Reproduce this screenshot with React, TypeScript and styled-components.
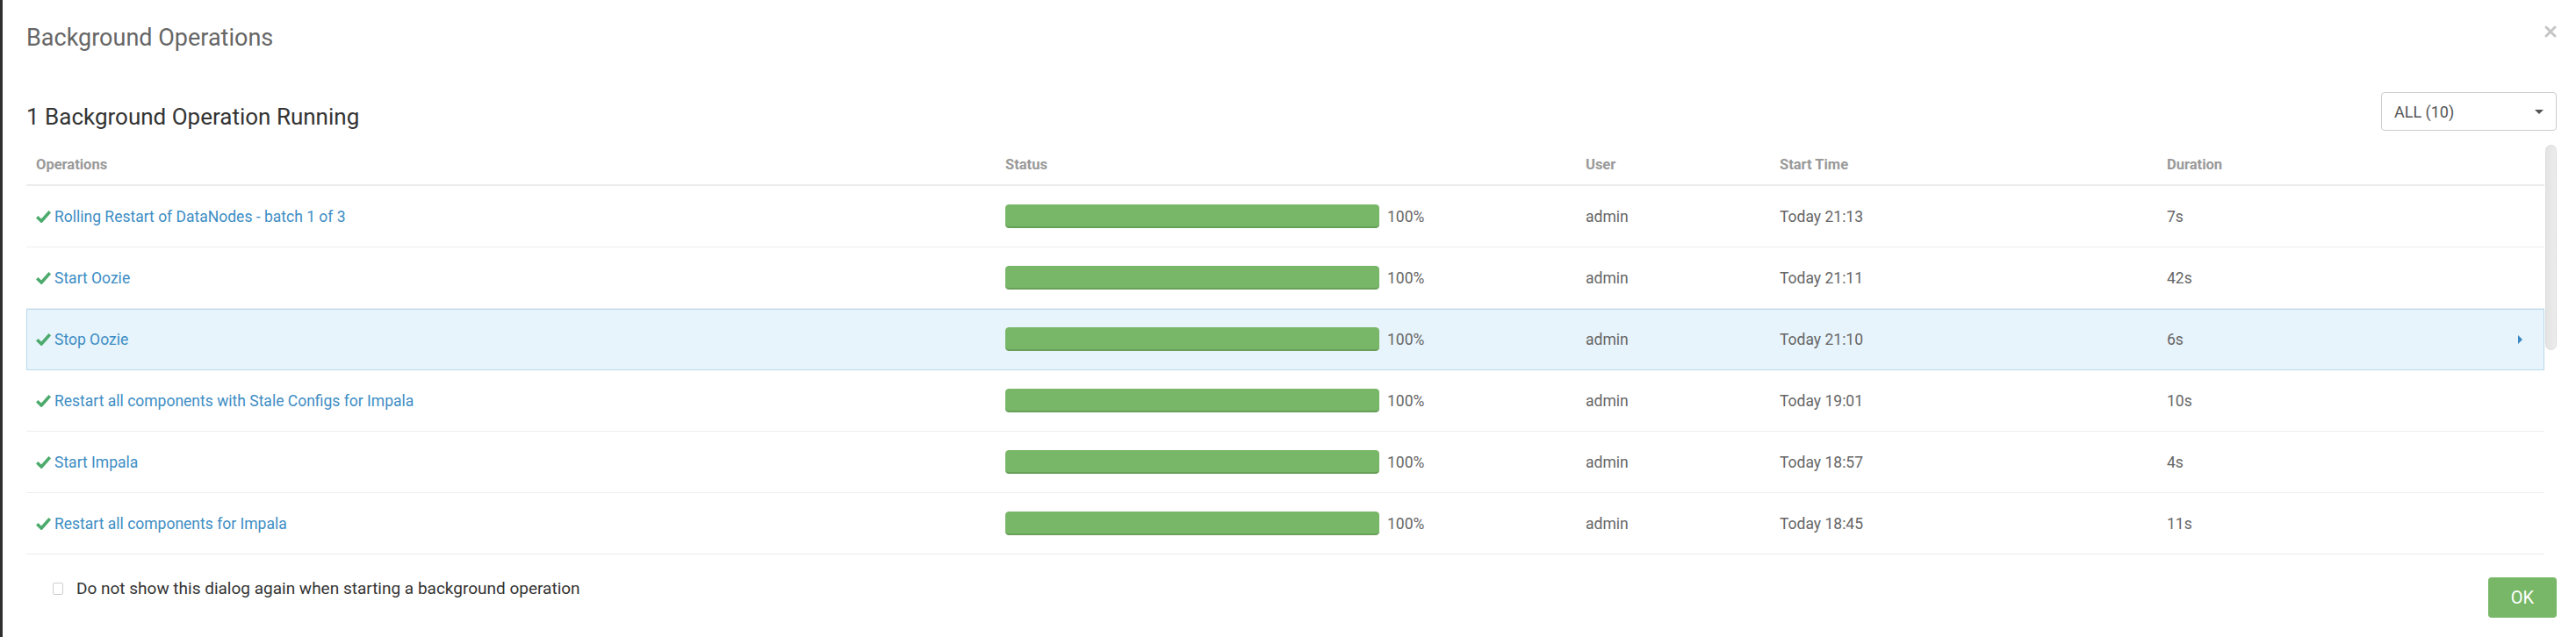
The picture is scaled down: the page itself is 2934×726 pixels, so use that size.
import React from "react";
import styled, { createGlobalStyle, css } from "styled-components";

type Operation = {
  name: string;
  progress: number;
  user: string;
  startTime: string;
  duration: string;
};

const operations: Operation[] = [
  { name: "Rolling Restart of DataNodes - batch 1 of 3", progress: 100, user: "admin", startTime: "Today 21:13", duration: "7s" },
  { name: "Start Oozie", progress: 100, user: "admin", startTime: "Today 21:11", duration: "42s" },
  { name: "Stop Oozie", progress: 100, user: "admin", startTime: "Today 21:10", duration: "6s" },
  { name: "Restart all components with Stale Configs for Impala", progress: 100, user: "admin", startTime: "Today 19:01", duration: "10s" },
  { name: "Start Impala", progress: 100, user: "admin", startTime: "Today 18:57", duration: "4s" },
  { name: "Restart all components for Impala", progress: 100, user: "admin", startTime: "Today 18:45", duration: "11s" },
];

const SELECTED = 2;

const CheckIcon = () => (
  <CheckSvg viewBox="0 0 17 15" aria-hidden>
    <path d="M1.2 8.2 L6.2 13 L15.8 2.2" fill="none" stroke="#4cab6c" strokeWidth="3.6" strokeLinejoin="miter" />
  </CheckSvg>
);

const App = () => {
  return (
    <>
      <GlobalStyle />
      <Modal>
        <ModalHeader>
          <ModalTitle>Background Operations</ModalTitle>
          <CloseButton aria-label="close">
            <svg width="14" height="14" viewBox="0 0 14 14">
              <path d="M2 2 L12 12 M12 2 L2 12" stroke="#c6c6c6" strokeWidth="3" strokeLinecap="round" />
            </svg>
          </CloseButton>
        </ModalHeader>

        <Toolbar>
          <RunningTitle>1 Background Operation Running</RunningTitle>
          <Select>
            <span>ALL (10)</span>
            <Caret />
          </Select>
        </Toolbar>

        <ScrollArea>
          <Viewport>
            <HeadRow>
              <HeadCell>Operations</HeadCell>
              <HeadCell>Status</HeadCell>
              <HeadCell>User</HeadCell>
              <HeadCell>Start Time</HeadCell>
              <HeadCell>Duration</HeadCell>
            </HeadRow>
            {operations.map((op, i) => (
              <Row key={op.name} $selected={i === SELECTED}>
                <Cell>
                  <CheckIcon />
                  <OpLink>{op.name}</OpLink>
                </Cell>
                <Cell>
                  <ProgressTrack>
                    <ProgressFill style={{ width: `${op.progress}%` }} />
                  </ProgressTrack>
                  <Percent>{op.progress}%</Percent>
                </Cell>
                <Cell>{op.user}</Cell>
                <Cell>{op.startTime}</Cell>
                <DurationCell>
                  {op.duration}
                  {i === SELECTED && <RowArrow />}
                </DurationCell>
              </Row>
            ))}
          </Viewport>
          <ScrollTrack>
            <ScrollThumb />
          </ScrollTrack>
        </ScrollArea>

        <Footer>
          <CheckLabel>
            <CheckBox />
            Do not show this dialog again when starting a background operation
          </CheckLabel>
          <OkButton>OK</OkButton>
        </Footer>
      </Modal>
    </>
  );
};

export default App;

const GlobalStyle = createGlobalStyle`
  html, body {
    margin: 0;
    padding: 0;
    background: #2f2f2f;
  }
  body {
    font-family: Roboto, "Liberation Sans", sans-serif;
  }
`;

const Modal = styled.div`
  margin-left: 3px;
  height: 726px;
  box-sizing: border-box;
  background: #fff;
  padding: 27px 22px 0 27px;
  display: flex;
  flex-direction: column;
  overflow: hidden;
`;

const ModalHeader = styled.div`
  display: flex;
  justify-content: space-between;
  align-items: flex-start;
`;

const ModalTitle = styled.h4`
  margin: 0;
  font-size: 27px;
  line-height: 32px;
  font-weight: 400;
  color: #666;
`;

const CloseButton = styled.button`
  border: 0;
  background: none;
  padding: 0;
  margin-top: 2px;
  width: 14px;
  height: 14px;
  display: flex;
  cursor: pointer;
`;

const Toolbar = styled.div`
  display: flex;
  justify-content: space-between;
  align-items: flex-start;
  margin-top: 46px;
`;

const RunningTitle = styled.h3`
  margin: 12px 0 0 0;
  font-size: 26px;
  line-height: 32px;
  font-weight: 400;
  color: #333;
`;

const Select = styled.div`
  width: 200px;
  height: 44px;
  box-sizing: border-box;
  border: 1px solid #ccc;
  border-radius: 4px;
  display: flex;
  align-items: center;
  justify-content: space-between;
  padding: 0 14px 0 14px;
  font-size: 18px;
  color: #555;
`;

const Caret = styled.span`
  width: 0;
  height: 0;
  border-left: 5px solid transparent;
  border-right: 5px solid transparent;
  border-top: 5px solid #555;
`;

const ScrollArea = styled.div`
  display: flex;
  gap: 1px;
  height: 468px;
  margin-top: 16px;
`;

const Viewport = styled.div`
  flex: 1;
  overflow: hidden;
`;

const ScrollTrack = styled.div`
  width: 13px;
`;

const ScrollThumb = styled.div`
  height: 234px;
  box-sizing: border-box;
  border: 1px solid #dcdcdc;
  border-radius: 7px;
  background: linear-gradient(to right, #e4e4e4, #ececec);
`;

const columns = css`
  display: grid;
  grid-template-columns: 1104px 661px 221px 441px 1fr;
`;

const HeadRow = styled.div`
  ${columns};
  height: 47px;
  box-sizing: border-box;
  border-bottom: 2px solid #ececec;
`;

const HeadCell = styled.div`
  display: flex;
  align-items: center;
  padding-left: 11px;
  font-size: 16.5px;
  font-weight: 700;
  color: #999;
`;

const Row = styled.div<{ $selected?: boolean }>`
  ${columns};
  height: 70px;
  box-sizing: border-box;
  border-bottom: 1px solid #eee;
  ${({ $selected }) =>
    $selected &&
    css`
      background: #e8f4fb;
      border-bottom-color: #b7dbef;
      box-shadow: inset 1px 1px 0 #b7dbef, inset -1px 0 0 #b7dbef;
    `}
`;

const Cell = styled.div`
  display: flex;
  align-items: center;
  padding-left: 11px;
  font-size: 17.5px;
  color: #666;
  white-space: nowrap;
`;

const DurationCell = styled(Cell)`
  justify-content: space-between;
  padding-right: 25px;
`;

const CheckSvg = styled.svg`
  width: 17px;
  height: 15px;
  margin-right: 4px;
  flex-shrink: 0;
`;

const OpLink = styled.a`
  color: #3d8dc4;
  text-decoration: none;
  cursor: pointer;
`;

const ProgressTrack = styled.div`
  width: 426px;
  height: 27px;
  border-radius: 4px;
  background: #f5f5f5;
  overflow: hidden;
`;

const ProgressFill = styled.div`
  height: 100%;
  background: #77b767;
  box-shadow: inset 0 -2px 0 rgba(0, 0, 0, 0.12);
  border-radius: 4px;
`;

const Percent = styled.span`
  margin-left: 9px;
  color: #666;
`;

const RowArrow = styled.span`
  width: 0;
  height: 0;
  border-top: 5px solid transparent;
  border-bottom: 5px solid transparent;
  border-left: 5px solid #3a88c2;
`;

const Footer = styled.div`
  display: flex;
  justify-content: space-between;
  align-items: flex-start;
`;

const CheckLabel = styled.label`
  display: flex;
  align-items: center;
  gap: 15px;
  margin: 26px 0 0 30px;
  font-size: 19px;
  line-height: 24px;
  color: #333;
`;

const CheckBox = styled.span`
  width: 12px;
  height: 14px;
  box-sizing: border-box;
  border: 1px solid #cfcfcf;
  border-radius: 2px;
  background: #fff;
`;

const OkButton = styled.button`
  margin-top: 25px;
  width: 78px;
  height: 46px;
  border: 0;
  border-radius: 4px;
  background: #77b767;
  color: #fff;
  font-family: Roboto, "Liberation Sans", sans-serif;
  font-size: 20px;
  cursor: pointer;
`;
